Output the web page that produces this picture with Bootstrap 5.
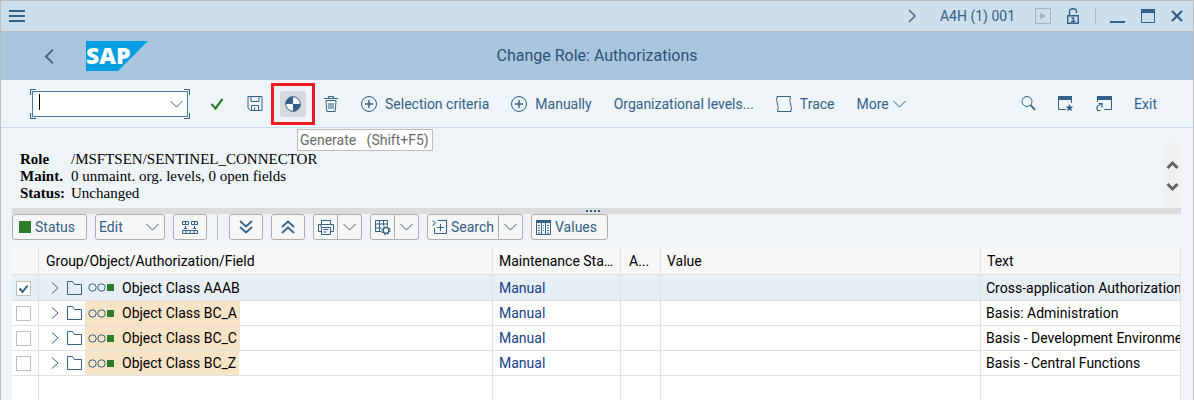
<!DOCTYPE html>
<html lang="en">
<head>
<meta charset="utf-8">
<meta name="viewport" content="width=device-width, initial-scale=1">
<title>Change Role: Authorizations</title>
<link href="https://cdn.jsdelivr.net/npm/bootstrap@5.3.0/dist/css/bootstrap.min.css" rel="stylesheet">
<style>
:root { --ink:#346187; --line:#e1e1e1; --edge:#bdbdbd; }
body { font-family:Roboto,"Liberation Sans",sans-serif; font-size:14px; line-height:20px; color:#000; background:#eef4f8; }
svg { display:block; flex:none; fill:none; stroke:var(--ink); }
.app-window { height:100vh; border:1px solid var(--edge); border-bottom:0; }
.title-strip { height:31px; background:#cddeec; border-bottom:1px solid var(--edge); color:var(--ink); padding:0 10px 0 8px; }
.strip-line { width:1px; height:16px; background:#a9bccb; margin:0 10px 0 12px; }
.faded { stroke:#9fb5c6; }
.page-head { height:48px; background:#a9c5de; color:#2b5278; font-size:16px; display:grid; grid-template-columns:1fr auto 1fr; padding:0 39px; }
.sap-logo { margin-left:28px; }
.tool-strip { height:48px; border-bottom:1px solid #c8dced; padding:0 31px 0 29px; gap:12px; }
.plain-btn { border:0; background:none; color:var(--ink); padding:0; height:26px; display:flex; align-items:center; justify-content:center; }
.icon-btn { width:26px; }
.text-btn { padding:0 5px; gap:8px; white-space:nowrap; }
.pressed { background:#d5d8de; border-radius:3px; }
.red-frame { position:absolute; inset:-8px -9px; border:3px solid #ed1c24; pointer-events:none; }
.tip { position:absolute; left:17px; top:38px; z-index:2; background:#fff; border:1px solid var(--edge); color:#6b6b6b; height:22px; line-height:20px; padding:0 3px 0 2px; white-space:pre; font-size:14px; }
.cmd { width:160px; height:30px; padding:2px; position:relative; margin-right:2px; }
.cmd > svg { position:absolute; inset:0; pointer-events:none; }
.cmd-box { border:1px solid #427cac; background:#fff; }
.cmd input { border:0; outline:0; background:none; min-width:0; padding:0 6px; }
.text-caret { position:absolute; left:9px; top:5px; width:1px; height:16px; background:#000; }
.role-info { font:15px/17px "Liberation Serif",serif; padding:23px 0 6px 8px; }
.role-info dl { display:grid; grid-template-columns:51px auto; margin:0; }
.role-info dd { margin:0; }
.body-area { padding:0 12px 0 11px; min-height:0; }
.scroll-rail { width:17px; background:#f0f0f0; margin-top:15px; }
.splitter { height:6px; background:#dcdcdc; display:flex; justify-content:center; padding-right:8px; }
.ctl { height:26px; border:1px solid #adadad; border-radius:3px; background:#f7f7f7; color:var(--ink); padding:0 6px; display:flex; align-items:center; justify-content:center; gap:4px; white-space:nowrap; }
.w-status { width:75px; justify-content:flex-start; }
.w-icon { width:34px; }
.w-half { width:25px; padding:0; }
.w-drop { width:24px; padding:0; }
.split .ctl:first-child { border-radius:3px 0 0 3px; }
.split .ctl:last-child { border-radius:0 3px 3px 0; border-left:0; }
.edit-box { position:relative; width:70px; }
.edit-box select { appearance:none; width:100%; height:26px; border:1px solid #adadad; border-radius:3px; background:#f7f7f7; color:var(--ink); padding:0 3px; }
.edit-box svg { position:absolute; right:6px; top:9px; pointer-events:none; }
.ctl-row { gap:8px; margin-bottom:8px; }
.v-line { width:1px; height:26px; background:var(--edge); margin:0 3px 0 2px; }
.grid-box { overflow:hidden; min-height:0; }
.role-grid { width:100%; table-layout:fixed; border-collapse:separate; border-spacing:0; background:#fff; }
.role-grid th, .role-grid td { border-right:1px solid var(--line); border-bottom:1px solid var(--line); padding:0 5px; height:25px; overflow:hidden; white-space:nowrap; font-weight:400; line-height:20px; }
.role-grid th { height:27px; background:#f7f7f7; padding:0 6px; text-overflow:ellipsis; }
.role-grid th:nth-child(2) { padding:0 7px; }
.role-grid th:nth-child(4) { padding:0 8px; }
.role-grid .picked td { background:#e8eef6; height:26px; }
.role-grid td:first-child { padding:1px 4px 0; }
.role-grid td:nth-child(2) { padding:0 0 0 12px; }
.role-grid td a { color:#15428b; text-decoration:none; padding-left:1px; }
.role-grid .rest td { height:auto; border-bottom:0; }
.c1 { width:27px; } .c2 { width:454px; } .c3 { width:128px; } .c4 { width:40px; } .c5 { width:320px; }
.tick { appearance:none; display:block; width:15px; height:15px; margin:0; border:1px solid #bfbfbf; background:#fff; }
.tick:checked { background:#fff url("data:image/svg+xml,%3Csvg xmlns='http://www.w3.org/2000/svg' viewBox='0 0 13 13'%3E%3Cpath d='M2.5 6.5l3 3.5 5-6.500' fill='none' stroke='%23346187' stroke-width='2'/%3E%3C/svg%3E"); }
.node { height:24px; padding:0 3px; gap:7px; margin-left:3px; }
.flagged { background:#f7e3c6; }
</style>
</head>
<body>
<svg width="0" height="0" class="position-absolute" aria-hidden="true">
  <symbol id="down" viewBox="0 0 13 8"><path d="M.5 1l6 6 6-6"/></symbol>
  <symbol id="plus" viewBox="0 0 16 16"><circle cx="8" cy="8" r="7.500"/><path d="M4 8h8M8 4v8" stroke-width="1.500"/></symbol>
  <symbol id="right" viewBox="0 0 8 12"><path d="M1 .5L7 6l-6 5.500"/></symbol>
  <symbol id="folder" viewBox="0 0 15 14"><path d="M.5 13.500V.5h5l2 3h7v10z"/></symbol>
  <symbol id="state" viewBox="0 0 27 9"><circle cx="4.500" cy="4.500" r="3.700"/><circle cx="13.500" cy="4.500" r="3.700"/><path d="M19 1h7v7h-7z" fill="#2b7d2b" stroke="none"/></symbol>
</svg>
<div class="app-window d-flex flex-column">
  <header class="title-strip d-flex align-items-center">
    <button class="plain-btn" aria-label="Menu"><svg width="16" height="12"><path d="M0 1h16M0 6h16M0 11h16" stroke-width="2"/></svg></button>
    <div class="ms-auto d-flex align-items-center">
      <button class="plain-btn me-4" aria-label="Expand"><svg width="8" height="14" viewBox="0 -1 8 14"><path d="M1 0l6 6-6 6" stroke-width="1.300"/></svg></button>
      <span>A4H (1) 001</span>
      <button class="plain-btn ms-3 px-1" aria-label="Play" disabled><svg class="faded" width="16" height="16"><path d="M.5.5h15v15H.5z"/><path d="M5 4.500l6 3.500-6 3.500z" fill="#9fb5c6" stroke="none"/></svg></button>
      <button class="plain-btn ms-2 px-1" aria-label="Lock"><svg width="12" height="16"><path d="M.7 7.700h10.600v7.600H.7zM2.500 7.500V3.700q0-3 3.500-3t3.500 3v1.500" stroke-width="1.400"/><path d="M4.500 10H6.500v3.500M4 13.500h4.500" stroke-width="1.400"/></svg></button>
      <span class="strip-line"></span>
      <button class="plain-btn px-1" aria-label="Minimize"><svg width="15" height="16"><path d="M0 14h15" stroke-width="2"/></svg></button>
      <button class="plain-btn ms-2 px-1" aria-label="Maximize"><svg width="14" height="14"><path d="M.5.5h13v13H.5z"/><path d="M0 2h14" stroke-width="4"/></svg></button>
      <button class="plain-btn ms-2 ps-1" aria-label="Close"><svg width="12" height="12"><path d="M1 1l10 10M11 1L1 11" stroke-width="2.200"/></svg></button>
    </div>
  </header>
  <div class="page-head align-items-center">
    <div class="d-flex align-items-center">
      <button class="plain-btn px-1" aria-label="Back"><svg width="10" height="15"><path d="M9 .7L2 7.500l7 6.800" stroke-width="1.800"/></svg></button>
      <svg class="sap-logo" width="62" height="30" role="img" aria-label="SAP"><path d="M0 0h62L32 30H0z" fill="#009de0" stroke="none"/><text x="0" y="23" font-family="Open Sans,sans-serif" font-weight="800" font-size="23" fill="#fff" stroke="none">SAP</text></svg>
    </div>
    <span>Change Role: Authorizations</span>
    <span></span>
  </div>
  <div class="tool-strip d-flex align-items-center">
    <div class="cmd">
      <svg width="160" height="30" stroke-width="1"><path d="M.5 6V.5H6M154 .5h5.500V6M.5 24v5.500H6M154 29.500h5.500V24"/></svg>
      <div class="cmd-box d-flex align-items-center h-100">
        <input class="flex-grow-1" type="text" aria-label="Command"><span class="text-caret"></span>
        <button class="plain-btn px-1" aria-label="History"><svg width="13" height="8"><use href="#down"/></svg></button>
      </div>
    </div>
    <button class="plain-btn icon-btn" aria-label="Accept"><svg width="14" height="12"><path d="M1.500 6l4 4.500L12.500 1" stroke="#2b7d2b" stroke-width="2.200"/></svg></button>
    <button class="plain-btn icon-btn" aria-label="Save"><svg width="16" height="15"><path d="M1 .5h14v14H3.500L1 12zM4 .5v5h8v-5M4.500 14.500v-5h7v5M7.500 11.500v3"/></svg></button>
    <div class="position-relative">
      <button class="plain-btn icon-btn pressed" aria-label="Generate"><svg width="16" height="16"><circle cx="8" cy="8" r="7.300" fill="#f4f6f9"/><path d="M8 8V.5A7.500 7.500 0 0 0 .5 8zM8 8v7.500A7.500 7.500 0 0 0 15.500 8z" fill="#346187" stroke="none"/></svg></button>
      <span class="red-frame"></span>
      <span class="tip" role="tooltip">Generate   (Shift+F5)</span>
    </div>
    <button class="plain-btn icon-btn" aria-label="Delete"><svg width="14" height="16"><path d="M0 2.500h14M4.500 2V.5h5V2M2 4.500h10M2 4.500l.8 11h8.400l.8-11M5 7v6M7 7v6M9 7v6"/></svg></button>
    <button class="plain-btn text-btn"><svg width="16" height="16"><use href="#plus"/></svg>Selection criteria</button>
    <button class="plain-btn text-btn"><svg width="16" height="16"><use href="#plus"/></svg>Manually</button>
    <button class="plain-btn text-btn">Organizational levels...</button>
    <button class="plain-btn text-btn"><svg width="16" height="16"><path d="M1 .5h13.500q-1.500 4 0 7.500t.500 7.500H1.500q1.500-4 0-7.500T1 .5z"/></svg>Trace</button>
    <button class="plain-btn text-btn gap-1">More<svg width="13" height="8"><use href="#down"/></svg></button>
    <button class="plain-btn icon-btn ms-auto" aria-label="Find"><svg width="15" height="15"><circle cx="6" cy="5.500" r="5"/><path d="M9.500 9l4.500 4.800" stroke-width="1.800"/></svg></button>
    <button class="plain-btn icon-btn" aria-label="New window"><svg width="16" height="16"><path d="M.5 1v12.500H8M13.500 1v6"/><path d="M0 2h14" stroke-width="4"/><path d="M11.500 8l1.100 2.500 2.700.2-2.100 1.700.7 2.800-2.400-1.500-2.400 1.500.7-2.800-2.100-1.700 2.700-.2z" fill="#346187" stroke="none"/></svg></button>
    <button class="plain-btn icon-btn" aria-label="Create shortcut"><svg width="16" height="16"><path d="M1.500 6V1M15.500 1v12.500H8"/><path d="M1 2h15" stroke-width="4"/><path d="M1 14.500h3.500M1.500 14C0 11 2 8.500 5.500 8.500M2.500 7.500h3.500v4" stroke-width="1.200"/></svg></button>
    <button class="plain-btn text-btn">Exit</button>
  </div>
  <main class="body-area d-flex flex-column flex-grow-1">
    <div class="d-flex justify-content-between">
      <div class="role-info"><dl><dt>Role</dt><dd>/MSFTSEN/SENTINEL_CONNECTOR</dd><dt>Maint.</dt><dd>0 unmaint. org. levels, 0 open fields</dd><dt>Status:</dt><dd>Unchanged</dd></dl></div>
      <div class="scroll-rail d-flex flex-column align-items-center justify-content-center"><svg width="13" height="34"><path d="M1.500 9l5-5 5 5M1.500 25l5 5 5-5" stroke="#606060" stroke-width="2.800"/></svg></div>
    </div>
    <div class="splitter"><svg width="14" height="6"><path d="M0 3h14" stroke-width="2" stroke-dasharray="2 2"/></svg></div>
    <div class="ctl-row d-flex align-items-center">
      <button class="ctl w-status"><svg width="12" height="12"><path d="M0 0h12v12H0z" fill="#2b7d2b" stroke="none"/></svg>Status</button>
      <div class="edit-box"><select aria-label="Edit"><option>Edit</option></select><svg width="13" height="8"><use href="#down"/></svg></div>
      <button class="ctl w-icon" aria-label="Organize"><svg width="16" height="14"><path d="M.5 1.500h6v3h-6zM9.500 1.500h6v3h-6zM3.500 1.500v3M12.500 1.500v3M3.500 6v3M12.500 6v3M2 8.500h3M11 8.500h3M.5 10.500h15v3H.5zM3 12h2M7 12h2M11 12h2"/></svg></button>
      <span class="v-line"></span>
      <button class="ctl w-icon" aria-label="Expand all"><svg width="14" height="14"><path d="M1 1l6 5.500L13 1M1 7l6 5.500L13 7" stroke-width="1.700"/></svg></button>
      <button class="ctl w-icon" aria-label="Collapse all"><svg width="14" height="14"><path d="M1 7l6-5.500L13 7M1 13l6-5.500 6 5.500" stroke-width="1.700"/></svg></button>
      <div class="split d-flex"><button class="ctl w-half" aria-label="Print"><svg width="16" height="15"><path d="M3.500 4V.5h9V4M3.500 11.500h-3v-7h15v7h-3M3.500 7.500h9v7h-9zM5.500 9.500h5M5.500 12h3M2 6h2"/></svg></button><button class="ctl w-drop" aria-label="Print options"><svg width="13" height="8"><use href="#down"/></svg></button></div>
      <div class="split d-flex"><button class="ctl w-half" aria-label="Layout"><svg width="16" height="15"><path d="M.5.5h12v5M.5.5v11h6M.5 4h12M.5 8h6M4.500.5v11M8.500.5v5"/><circle cx="11" cy="10.500" r="2.800" stroke-width="1.300"/><circle cx="11" cy="10.500" r="4" stroke-width="1.300" stroke-dasharray="1.500 1.640"/></svg></button><button class="ctl w-drop" aria-label="Layout options"><svg width="13" height="8"><use href="#down"/></svg></button></div>
      <div class="split d-flex"><button class="ctl px-1"><svg width="15" height="14"><path d="M5.500 .5h9v13H2.500V8M.5.5L3.500 3l-3 2.500M5 7.500h7M8.500 4v7"/></svg>Search</button><button class="ctl w-drop" aria-label="Search options"><svg width="13" height="8"><use href="#down"/></svg></button></div>
      <button class="ctl ps-1"><svg width="15" height="15"><path d="M.5.5h14v14H.5zM5.500 2v13M9.500 2v13"/><path d="M0 1.500h15" stroke-width="3"/><path d="M2 5.500h2M2 8h2M2 10.500h2M2 13h2M7 5.500h1M7 8h1M7 10.500h1M11 5.500h2M11 8h2M11 10.500h2M11 13h2"/></svg><span class="pe-1">Values</span></button>
    </div>
    <div class="grid-box d-flex flex-grow-1">
      <table class="role-grid">
        <colgroup><col class="c1"><col class="c2"><col class="c3"><col class="c4"><col class="c5"><col></colgroup>
        <thead><tr><th></th><th>Group/Object/Authorization/Field</th><th>Maintenance Sta...</th><th>A...</th><th>Value</th><th>Text</th></tr></thead>
        <tbody>
          <tr class="picked"><td><input class="tick" type="checkbox" checked aria-label="Object Class AAAB"></td><td><div class="d-flex align-items-center"><svg width="8" height="12"><use href="#right"/></svg><svg class="ms-2" width="15" height="14"><use href="#folder"/></svg><span class="node d-flex align-items-center"><svg width="27" height="9"><use href="#state"/></svg>Object Class AAAB</span></div></td><td><a href="#">Manual</a></td><td></td><td></td><td>Cross-application Authorization</td></tr>
          <tr><td><input class="tick" type="checkbox" aria-label="Object Class BC_A"></td><td><div class="d-flex align-items-center"><svg width="8" height="12"><use href="#right"/></svg><svg class="ms-2" width="15" height="14"><use href="#folder"/></svg><span class="node flagged d-flex align-items-center"><svg width="27" height="9"><use href="#state"/></svg>Object Class BC_A</span></div></td><td><a href="#">Manual</a></td><td></td><td></td><td>Basis: Administration</td></tr>
          <tr><td><input class="tick" type="checkbox" aria-label="Object Class BC_C"></td><td><div class="d-flex align-items-center"><svg width="8" height="12"><use href="#right"/></svg><svg class="ms-2" width="15" height="14"><use href="#folder"/></svg><span class="node flagged d-flex align-items-center"><svg width="27" height="9"><use href="#state"/></svg>Object Class BC_C</span></div></td><td><a href="#">Manual</a></td><td></td><td></td><td>Basis - Development Environment</td></tr>
          <tr><td><input class="tick" type="checkbox" aria-label="Object Class BC_Z"></td><td><div class="d-flex align-items-center"><svg width="8" height="12"><use href="#right"/></svg><svg class="ms-2" width="15" height="14"><use href="#folder"/></svg><span class="node flagged d-flex align-items-center"><svg width="27" height="9"><use href="#state"/></svg>Object Class BC_Z</span></div></td><td><a href="#">Manual</a></td><td></td><td></td><td>Basis - Central Functions</td></tr>
          <tr class="rest"><td></td><td></td><td></td><td></td><td></td><td></td></tr>
        </tbody>
      </table>
    </div>
  </main>
</div>
<script src="https://cdn.jsdelivr.net/npm/bootstrap@5.3.0/dist/js/bootstrap.bundle.min.js"></script>
</body>
</html>
